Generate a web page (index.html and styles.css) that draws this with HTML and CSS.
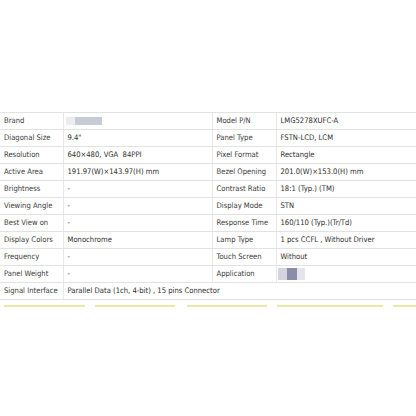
FILE: index.html
```html
<!DOCTYPE html>
<html>
<head>
<meta charset="utf-8">
<link rel="stylesheet" href="styles.css">
</head>
<body>
<div class="page">
  <table class="spec">
    <colgroup>
      <col class="c-lab1"><col class="c-val1"><col class="c-lab2"><col class="c-val2">
    </colgroup>
    <tbody>
      <tr><td class="lab">Brand</td><td><span class="blur brand"><span class="b-l"></span><span class="b-d"></span></span></td><td class="lab">Model P/N</td><td>LMG5278XUFC-A</td></tr>
      <tr><td class="lab">Diagonal Size</td><td>9.4"</td><td class="lab">Panel Type</td><td>FSTN-LCD, LCM</td></tr>
      <tr><td class="lab">Resolution</td><td>640×480, VGA&nbsp;&nbsp;84PPI</td><td class="lab">Pixel Format</td><td>Rectangle</td></tr>
      <tr><td class="lab">Active Area</td><td>191.97(W)×143.97(H) mm</td><td class="lab">Bezel Opening</td><td>201.0(W)×153.0(H) mm</td></tr>
      <tr><td class="lab">Brightness</td><td>-</td><td class="lab">Contrast Ratio</td><td>18:1 (Typ.) (TM)</td></tr>
      <tr><td class="lab">Viewing Angle</td><td>-</td><td class="lab">Display Mode</td><td>STN</td></tr>
      <tr><td class="lab">Best View on</td><td>-</td><td class="lab">Response Time</td><td>160/110 (Typ.)(Tr/Td)</td></tr>
      <tr><td class="lab">Display Colors</td><td>Monochrome</td><td class="lab">Lamp Type</td><td>1 pcs CCFL , Without Driver</td></tr>
      <tr><td class="lab">Frequency</td><td>-</td><td class="lab">Touch Screen</td><td>Without</td></tr>
      <tr><td class="lab">Panel Weight</td><td>-</td><td class="lab">Application</td><td><span class="blur app"><span class="a-l"></span><span class="a-d"></span><span class="a-r"></span></span></td></tr>
      <tr><td class="lab">Signal Interface</td><td colspan="3">Parallel Data (1ch, 4-bit) , 15 pins Connector</td></tr>
    </tbody>
  </table>
  <div class="tabs">
    <span class="tab t1"></span><span class="tab t2"></span><span class="tab t3"></span><span class="tab t4"></span><span class="tab t5"></span>
  </div>
</div>
</body>
</html>
```
FILE: styles.css
```css
html, body {
  margin: 0;
  padding: 0;
  background: #ffffff;
}
.page {
  width: 416px;
  height: 416px;
  padding-top: 112px;
  box-sizing: border-box;
  overflow: hidden;
}
.spec {
  width: 420px;
  border-collapse: collapse;
  table-layout: fixed;
  font-family: "DejaVu Sans Condensed", "DejaVu Sans", sans-serif;
  font-size: 7.6px;
  color: #2e2e2e;
}
.c-lab1 { width: 63px; }
.c-val1 { width: 149px; }
.c-lab2 { width: 64px; }
.c-val2 { width: auto; }
.spec td {
  height: 16px;
  padding: 0 0 0 4px;
  border-top: 1px solid #e2e2e2;
  border-bottom: 1px solid #e2e2e2;
  border-left: 1px solid #e8e8e8;
  white-space: nowrap;
  vertical-align: middle;
  line-height: 16px;
}
.spec td:first-child { border-left: none; padding-left: 4px; }
.spec td.lab { color: #3a3a3a; }
.blur {
  display: inline-flex;
  vertical-align: middle;
  filter: blur(0.6px);
}
.brand { height: 8px; margin-left: -2px; }
.b-l { width: 9px; background: #ececf0; }
.b-d { width: 27px; background: #c8cad6; }
.app { height: 12px; margin-left: -3px; }
.a-l { width: 9px; background: #d4d4de; }
.a-d { width: 10px; background: #8c8ca8; }
.a-r { width: 8px; background: #e4e4ea; }
.tabs {
  display: flex;
  gap: 10px;
  margin-top: 5px;
  padding-left: 4px;
}
.tab {
  height: 2px;
  background: #ebe7a6;
}
.t1 { width: 81px; }
.t2 { width: 80px; margin-right: 2px; }
.t3 { width: 80px; }
.t4 { width: 106px; }
.t5 { flex: 1; }
```
